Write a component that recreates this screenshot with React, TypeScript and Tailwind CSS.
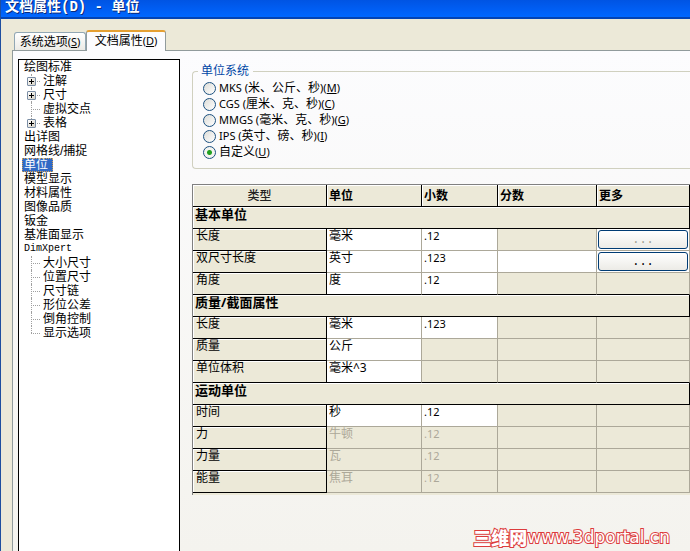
import { useState } from "react";
import clsx from "clsx";

type TreeItem = { label: string; expandable?: boolean };
type TreeNode = { label: string; latin?: boolean; children?: TreeItem[] };

const TREE: TreeNode[] = [
  {
    label: "绘图标准",
    children: [
      { label: "注解", expandable: true },
      { label: "尺寸", expandable: true },
      { label: "虚拟交点" },
      { label: "表格", expandable: true },
    ],
  },
  { label: "出详图" },
  { label: "网格线/捕捉" },
  { label: "单位" },
  { label: "模型显示" },
  { label: "材料属性" },
  { label: "图像品质" },
  { label: "钣金" },
  { label: "基准面显示" },
  {
    label: "DimXpert",
    latin: true,
    children: [
      { label: "大小尺寸" },
      { label: "位置尺寸" },
      { label: "尺寸链" },
      { label: "形位公差" },
      { label: "倒角控制" },
      { label: "显示选项" },
    ],
  },
];

const SYSTEMS = [
  { id: "mks", prefix: "MKS (", name: "米、公斤、秒", suffix: ")", hotkey: "M" },
  { id: "cgs", prefix: "CGS (", name: "厘米、克、秒", suffix: ")", hotkey: "C" },
  { id: "mmgs", prefix: "MMGS (", name: "毫米、克、秒", suffix: ")", hotkey: "G" },
  { id: "ips", prefix: "IPS (", name: "英寸、磅、秒", suffix: ")", hotkey: "I" },
  { id: "custom", prefix: "", name: "自定义", suffix: "", hotkey: "U" },
];

type UnitRow = {
  type: string;
  unit: string;
  decimals?: string;
  fractions?: boolean;
  more?: "on" | "off";
  disabled?: boolean;
};

const GROUPS: { title: string; rows: UnitRow[] }[] = [
  {
    title: "基本单位",
    rows: [
      { type: "长度", unit: "毫米", decimals: ".12", more: "off" },
      { type: "双尺寸长度", unit: "英寸", decimals: ".123", fractions: true, more: "on" },
      { type: "角度", unit: "度", decimals: ".12" },
    ],
  },
  {
    title: "质量/截面属性",
    rows: [
      { type: "长度", unit: "毫米", decimals: ".123" },
      { type: "质量", unit: "公斤" },
      { type: "单位体积", unit: "毫米^3" },
    ],
  },
  {
    title: "运动单位",
    rows: [
      { type: "时间", unit: "秒", decimals: ".12" },
      { type: "力", unit: "牛顿", decimals: ".12", disabled: true },
      { type: "力量", unit: "瓦", decimals: ".12", disabled: true },
      { type: "能量", unit: "焦耳", decimals: ".12", disabled: true },
    ],
  },
];

export default function App() {
  return (
    <div className="min-h-screen flex flex-col bg-[#ece9d8] border-l border-[#1f4f9f] text-black text-[12px] leading-[14px] font-['Noto_Sans','Noto_Sans_CJK_SC',sans-serif]">
      <header className="h-[19px] shrink-0 pl-1 bg-linear-to-b from-[#0054e3] via-[#005df2] to-[#0068ff] border-b-2 border-[#0344b4]">
        <h1 className="text-[14px] leading-[14px] font-bold text-white whitespace-pre font-['Liberation_Mono','Noto_Sans_CJK_SC',monospace] [text-shadow:1px_1px_0_#0a2a7a]">
          文档属性(D) - 单位
        </h1>
      </header>

      <div role="tablist" className="flex items-end h-[32px] pl-[13px] shrink-0">
        <button
          role="tab"
          aria-selected={false}
          className="w-[72px] h-[18px] mb-px whitespace-nowrap rounded-t-[3px] border border-b-0 border-[#91a7b4] bg-linear-to-b from-white to-[#ecebe5]"
        >
          系统选项<Hotkey letter="S" />
        </button>
        <button
          role="tab"
          aria-selected
          className="relative z-10 w-[80px] h-[21px] pb-px whitespace-nowrap rounded-t-[3px] border border-b-0 border-t-2 border-[#919b9c] border-t-[#e5a032] bg-[#fcfcfe]"
        >
          文档属性<Hotkey letter="D" />
        </button>
      </div>

      <main className="grow flex ml-[11px] -mt-px border-l border-t border-[#919b9c] bg-linear-to-b from-[#fcfcfe] to-[#f4f3ee]">
        <nav className="w-[162px] shrink-0 mt-2 ml-[5px] border border-b-0 border-black bg-white font-['Liberation_Sans','Noto_Sans_CJK_SC',sans-serif]">
          <ul>
            {TREE.map((node) => (
              <TreeBranch key={node.label} node={node} selected={node.label === "单位"} />
            ))}
          </ul>
        </nav>

        <div className="grow min-w-0 flex flex-col ml-3">
          <UnitSystem />
          <UnitTable />
          <div className="mt-auto self-end mr-5 mb-1 flex items-center text-white whitespace-nowrap leading-5 [paint-order:stroke] [-webkit-text-stroke:2px_#dc3c3c]">
            <span className="text-[18px] font-black font-['Noto_Sans_CJK_SC',sans-serif]">三维网</span>
            <span className="text-[17px] font-['DejaVu_Sans',sans-serif]">www.3dportal.cn</span>
          </div>
        </div>
      </main>
    </div>
  );
}

function Hotkey({ letter }: { letter: string }) {
  return (
    <span className="text-[11px]">
      (<u>{letter}</u>)
    </span>
  );
}

function TreeBranch({ node, selected }: { node: TreeNode; selected: boolean }) {
  const last = (node.children?.length ?? 0) - 1;
  return (
    <li>
      <div className="h-[14px] pl-[3px] flex">
        <span
          className={clsx(
            "px-[2px] whitespace-nowrap",
            node.latin && "text-[10px] font-['Liberation_Mono',monospace]",
            selected && "w-[31px] bg-[#316ac5] text-white outline-1 -outline-offset-1 outline-dotted outline-[#d6a050]"
          )}
        >
          {node.label}
        </span>
      </div>
      {node.children && (
        <ul>
          {node.children.map((item, i) => (
            <li key={item.label} className="relative h-[14px] flex items-center pl-6">
              <span
                className={clsx(
                  "absolute left-3 top-0 border-l border-dotted border-[#a0a0a0]",
                  i === last ? "h-[7px]" : "h-[14px]"
                )}
              />
              <span className="absolute left-3 top-[7px] w-[9px] border-t border-dotted border-[#a0a0a0]" />
              {item.expandable && (
                <button
                  aria-label={`展开${item.label}`}
                  className="absolute left-2 top-[3px] size-[9px] rounded-[1px] border border-[#7b8ea5] bg-linear-to-br from-white to-[#d5d0c4]"
                >
                  <svg viewBox="0 0 7 7" className="size-[7px]" shapeRendering="crispEdges">
                    <path d="M1 3.5h5M3.5 1v5" stroke="#000" />
                  </svg>
                </button>
              )}
              {item.label}
            </li>
          ))}
        </ul>
      )}
    </li>
  );
}

function UnitSystem() {
  const [system, setSystem] = useState("custom");
  return (
    <fieldset className="mt-[13px] h-[105px] shrink-0 pl-[10px] border border-r-0 border-[#d0d0bf] rounded-l-[4px]">
      <legend className="-ml-[5px] pl-[3px] pr-1 text-[#0046a5]">单位系统</legend>
      <div className="flex flex-col pt-[2px]">
        {SYSTEMS.map((s) => (
          <label key={s.id} className="flex items-center h-4 gap-[3px] w-fit whitespace-nowrap">
            <input
              type="radio"
              name="system"
              checked={system === s.id}
              onChange={() => setSystem(s.id)}
              className="appearance-none size-[13px] rounded-full border border-[#1c5180] bg-linear-to-br from-[#dcdcd7] to-white checked:bg-[radial-gradient(circle,#21a121_0_2px,#f4f4f0_3px)]"
            />
            <span>
              <span className="text-[11px]">{s.prefix}</span>
              {s.name}
              <span className="text-[11px]">{s.suffix}</span>
              <Hotkey letter={s.hotkey} />
            </span>
          </label>
        ))}
      </div>
    </fieldset>
  );
}

function UnitTable() {
  const head = "h-[22px] border-r border-b border-black px-[2px] text-left font-bold shadow-[inset_1px_1px_0_#fff]";
  return (
    <div className="mt-[15px] pb-[2px] border-l border-t border-[#808080] bg-[#ece9d8]">
      <table className="w-full table-fixed border-separate border-spacing-0 whitespace-nowrap">
        <colgroup>
          <col className="w-[134px]" />
          <col className="w-[95px]" />
          <col className="w-[76px]" />
          <col className="w-[99px]" />
          <col />
        </colgroup>
        <thead>
          <tr>
            <th className="h-[22px] border-r border-b border-black text-center font-medium text-[#222] shadow-[inset_1px_1px_0_#fff]">
              类型
            </th>
            <th className={head}>单位</th>
            <th className={head}>小数</th>
            <th className={head}>分数</th>
            <th className={head}>更多</th>
          </tr>
        </thead>
        {GROUPS.map((g, gi) => (
          <tbody key={g.title}>
            <tr>
              <th
                colSpan={5}
                className="h-[22px] p-0 pl-[2px] align-top text-left text-[13px] font-bold border-r border-b border-black shadow-[inset_1px_1px_0_#fff]"
              >
                {g.title}
              </th>
            </tr>
            {g.rows.map((r, i) => (
              <Row key={r.type} row={r} closing={i === g.rows.length - 1 && gi < GROUPS.length - 1} />
            ))}
          </tbody>
        ))}
      </table>
    </div>
  );
}

function Row({ row, closing }: { row: UnitRow; closing: boolean }) {
  const cell = clsx(
    "h-[22px] p-0 pl-[2px] align-top border-r border-b border-r-[#aca899]",
    closing ? "border-b-black" : "border-b-[#aca899]",
    row.disabled && "text-[#aca899]"
  );
  return (
    <tr>
      <th className="h-[22px] p-0 pl-[3px] align-top text-left font-normal border-r border-b border-black shadow-[inset_1px_1px_0_#fff]">
        {row.type}
      </th>
      <td className={clsx(cell, !row.disabled && "bg-white")}>{row.unit}</td>
      <td className={clsx(cell, "text-[11px]", row.decimals && !row.disabled && "bg-white")}>{row.decimals}</td>
      <td className={clsx(cell, row.fractions && "bg-white")} />
      <td className={clsx(cell, row.more && "bg-white pr-px !pl-px")}>
        {row.more && (
          <button
            disabled={row.more === "off"}
            className="block w-full h-[19px] mt-px rounded-[3px] border border-[#003c74] bg-linear-to-b from-white to-[#ecebe6] leading-[16px] font-['Liberation_Mono',monospace] text-black disabled:text-[#a1a192]"
          >
            ...
          </button>
        )}
      </td>
    </tr>
  );
}
